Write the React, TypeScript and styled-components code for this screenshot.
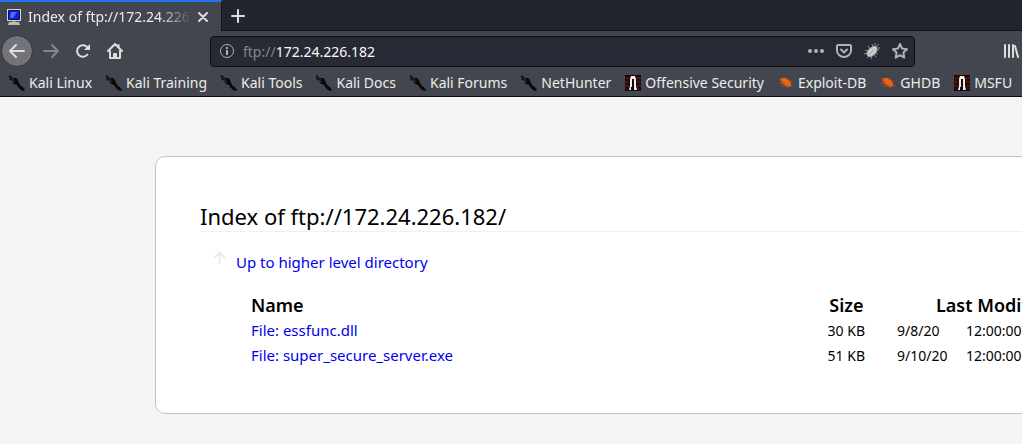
import React from "react";
import styled, { createGlobalStyle } from "styled-components";

const GlobalStyle = createGlobalStyle`
  * { box-sizing: border-box; }
  body {
    margin: 0;
    background: #f5f4f2;
    color: #000;
    font-family: "Noto Sans", "Open Sans", sans-serif;
    font-size: 14px;
    overflow-x: hidden;
  }
  button, input { font: inherit; color: inherit; }
  svg { display: block; flex: none; }
`;

const Chrome = styled.header`
  background: #43464e;
  color: #ececea;
  border-bottom: 1px solid #0c0c0d;
  overflow: hidden;
`;

const TabStrip = styled.div`
  display: flex;
  height: 31px;
  background: #23252e;
  border-bottom: 1px solid #15161c;
`;

const Tab = styled.div`
  display: flex;
  align-items: center;
  flex: none;
  width: 222px;
  height: 31px;
  padding: 0 12px 0 6px;
  gap: 6px;
  background: #43464e;
  border-top: 2px solid #2277f5;
  border-right: 1px solid #15161c;
`;

const TabTitle = styled.span`
  flex: 1;
  min-width: 0;
  overflow: hidden;
  white-space: nowrap;
  line-height: 22px;
  mask-image: linear-gradient(to left, transparent, #000 32px);
`;

const IconButton = styled.button<{ $size?: number; $round?: boolean; $dim?: boolean }>`
  display: flex;
  align-items: center;
  justify-content: center;
  flex: none;
  width: ${(p) => p.$size ?? 28}px;
  height: ${(p) => p.$size ?? 28}px;
  padding: 0;
  border: ${(p) => (p.$round ? "1px solid #33353b" : "0")};
  border-radius: ${(p) => (p.$round ? "50%" : "3px")};
  background: ${(p) => (p.$round ? "#72747a" : "transparent")};
  color: ${(p) => (p.$dim ? "#85878b" : "#dededb")};
`;

const NavBar = styled.div`
  display: flex;
  align-items: center;
  height: 40px;
  padding-left: 1px;
`;

const NavButtons = styled.div`
  display: flex;
  align-items: center;
  gap: 3px;
  flex: none;
  width: 209px;
`;

const UrlBar = styled.div`
  display: flex;
  align-items: center;
  flex: 1;
  height: 31px;
  min-width: 0;
  padding-left: 8px;
  margin-right: 85px;
  border: 1px solid #0f1014;
  border-radius: 4px;
  background: #272935;
`;

const Scheme = styled.label`
  margin-left: 8px;
  color: #85868c;
`;

const UrlInput = styled.input`
  flex: 1;
  min-width: 0;
  padding: 0;
  border: 0;
  outline: 0;
  background: transparent;
  color: #f9f9fa;
`;

const Bookmarks = styled.nav`
  display: flex;
  gap: 14px;
  height: 25px;
  padding-left: 9px;
`;

const Bookmark = styled.a`
  display: flex;
  align-items: center;
  flex: none;
  gap: 4px;
  height: 24px;
  color: inherit;
  text-decoration: none;
  line-height: 20px;
  white-space: nowrap;
`;

const Page = styled.main`
  padding: 59px 0 30px 155px;
  overflow: hidden;
`;

const Card = styled.section`
  margin-right: -134px;
  padding: 44px 45px 45px 44px;
  border: 1px solid #c6c2be;
  border-radius: 10px;
  background: #fff;
`;

const Title = styled.h1`
  margin: 0;
  border-bottom: 1px solid #f0f0f0;
  font-size: 22px;
  font-weight: 400;
  line-height: 30px;
`;

const UpLink = styled.a`
  display: flex;
  gap: 9px;
  margin: 18px 0 0 12px;
  color: #0000ee;
  font-size: 15px;
  line-height: 24px;
  text-decoration: none;
`;

const Listing = styled.table`
  width: calc(100% - 51px);
  margin: 18px 0 0 51px;
  border-collapse: collapse;
  table-layout: fixed;
  white-space: nowrap;
`;

const Head = styled.th<{ $left?: boolean }>`
  padding: 0;
  font-size: 18px;
  font-weight: 600;
  line-height: 26px;
  text-align: ${(p) => (p.$left ? "left" : "center")};
`;

const Cell = styled.td<{ $kind?: "name" | "size" }>`
  padding: 0 ${(p) => (p.$kind === "size" ? 16 : 0)}px 0 ${(p) => (p.$kind ? 0 : 16)}px;
  font-size: ${(p) => (p.$kind === "name" ? 15 : 14)}px;
  line-height: 25px;
  text-align: ${(p) => (p.$kind === "size" ? "right" : "left")};
`;

const Col = styled.col<{ $width?: number }>`
  width: ${(p) => (p.$width ? `${p.$width}px` : "auto")};
`;

const FileLink = styled.a`
  color: #0000ee;
  text-decoration: none;
`;

const ComputerIcon = () => (
  <svg width="16" height="16" viewBox="0 0 16 16">
    <path d="M1 0h14v12H1z" fill="#d9d6c8" />
    <path d="M2.500 1.500h11v9h-11z" fill="#1022d8" stroke="#08105e" />
    <path d="M5 3h6L7 9H4z" fill="#4b6cff" />
    <path d="M6 12h4v1H6z" fill="#8b897f" />
    <path d="M3 13h10l1 3H2z" fill="#bdbab0" />
  </svg>
);

const DragonIcon = () => (
  <svg width="16" height="16" viewBox="0 0 16 16" fill="#08090b">
    <path d="M0 0l2 1 2 2 3 0 2 2 1 3 2 3 2 1 2 3-1 1-3-1-3-3-1-2-3-1-2-3-2-1-1-3z" />
    <path d="M1 2l4 3M2 5l4 2" stroke="#3a3c42" />
  </svg>
);

const SecurityIcon = () => (
  <svg width="16" height="16" viewBox="0 0 16 16">
    <path d="M0 0h16v16H0z" fill="#1c0606" />
    <path d="M0 3h5M11 3h5M0 7h4M12 7h4M0 11h4M12 11h4" stroke="#5e2826" />
    <path d="M1 5h3M12 5h3M1 9h2M13 9h2M1 14h2M13 14h2" stroke="#421715" />
    <path d="M6 1h4l1 3v7l1 4H9V5H7v6l-1 4H4l1-4V4z" fill="#f1eeea" />
    <path d="M7 4h2v7H7zM6 12h3v4H6z" fill="#15090a" />
  </svg>
);

const ExploitIcon = () => (
  <svg width="16" height="16" viewBox="0 0 16 16" fill="#ef6212">
    <path d="M2 4l3-1 3 0 3 2 2 3 0 3-2 1-4-1-3-3z" />
    <path d="M2 5l3 2M1 8h5M3 11l4-2M5 12l3-2M9 5l2-2M11 7l3-1M12 10l3 1M9 10l0 3M2 3l3 1" fill="none" stroke="#ad4e1b" />
  </svg>
);

const bookmarks: { label: string; Icon: React.FC }[] = [
  { label: "Kali Linux", Icon: DragonIcon },
  { label: "Kali Training", Icon: DragonIcon },
  { label: "Kali Tools", Icon: DragonIcon },
  { label: "Kali Docs", Icon: DragonIcon },
  { label: "Kali Forums", Icon: DragonIcon },
  { label: "NetHunter", Icon: DragonIcon },
  { label: "Offensive Security", Icon: SecurityIcon },
  { label: "Exploit-DB", Icon: ExploitIcon },
  { label: "GHDB", Icon: ExploitIcon },
  { label: "MSFU", Icon: SecurityIcon },
];

const files = [
  { name: "essfunc.dll", size: "30 KB", date: "9/8/20", time: "12:00:00 AM GMT" },
  { name: "super_secure_server.exe", size: "51 KB", date: "9/10/20", time: "12:00:00 AM GMT" },
];

const stroke = { fill: "none", stroke: "currentColor", strokeWidth: 2, strokeLinecap: "round", strokeLinejoin: "round" } as const;

export default function App() {
  return (
    <>
      <GlobalStyle />
      <Chrome>
        <TabStrip>
          <Tab>
            <ComputerIcon />
            <TabTitle>Index of ftp://172.24.226.182/</TabTitle>
            <IconButton $size={12} aria-label="Close tab">
              <svg width="10" height="10" viewBox="0 0 10 10" {...stroke}><path d="M1 1l8 8M9 1L1 9" /></svg>
            </IconButton>
          </Tab>
          <IconButton $size={32} aria-label="New tab">
            <svg width="14" height="14" viewBox="0 0 14 14" {...stroke}><path d="M7 1v12M1 7h12" /></svg>
          </IconButton>
        </TabStrip>
        <NavBar>
          <NavButtons>
            <IconButton $size={32} $round aria-label="Back">
              <svg width="16" height="16" viewBox="0 0 16 16" {...stroke}><path d="M15 8H1M7 2L1 8l6 6" /></svg>
            </IconButton>
            <IconButton $size={29} $dim aria-label="Forward">
              <svg width="16" height="16" viewBox="0 0 16 16" {...stroke}><path d="M1 8h14M9 2l6 6-6 6" /></svg>
            </IconButton>
            <IconButton $size={29} aria-label="Reload">
              <svg width="16" height="16" viewBox="0 0 16 16" {...stroke}>
                <path d="M12.500 11.500A5.800 5.800 0 1 1 12.500 4.500" />
                <path d="M15 1v6H9z" fill="currentColor" stroke="none" />
              </svg>
            </IconButton>
            <IconButton $size={29} aria-label="Home">
              <svg width="16" height="16" viewBox="0 0 16 16" {...stroke}>
                <path d="M1 8l7-7 7 7M3 8v7h10V8" />
                <path d="M7 15v-4h2v4M11.500 2v2" />
              </svg>
            </IconButton>
          </NavButtons>
          <UrlBar>
            <svg width="16" height="16" viewBox="0 0 16 16" fill="none" stroke="#b1b1b3">
              <circle cx="8" cy="8" r="6.500" />
              <path d="M8 7v5M8 4v2" strokeWidth="2" />
            </svg>
            <Scheme htmlFor="address">ftp://</Scheme>
            <UrlInput id="address" defaultValue="172.24.226.182" />
            <IconButton aria-label="Page actions">
              <svg width="16" height="16" viewBox="0 0 16 16" fill="#b1b1b3">
                <circle cx="2" cy="8" r="2" /><circle cx="8" cy="8" r="2" /><circle cx="14" cy="8" r="2" />
              </svg>
            </IconButton>
            <IconButton aria-label="Save to Pocket">
              <svg width="16" height="16" viewBox="0 0 16 16" {...stroke} stroke="#b1b1b3">
                <path d="M2 2h12c.6 0 1 .4 1 1v4.500a7 6.500 0 0 1-14 0V3c0-.6.4-1 1-1z" />
                <path d="M5 6.500l3 3 3-3" />
              </svg>
            </IconButton>
            <IconButton aria-label="Inspect element">
              <svg width="16" height="16" viewBox="0 0 16 16" fill="none" stroke="#8e8f93">
                <path d="M6 6L4 3M4 8L1 7M4 10L0 11M5 13l-2 2M8 13l-1 3M10 11l2 3M11 9l3 2M12 7l3 0M9 4L8 1M12 4l3-3M11 3V0M13 5h3" />
                <ellipse cx="8" cy="8.500" rx="3.500" ry="6" transform="rotate(45 8 8.500)" fill="#d0d0d0" stroke="#b5b5b5" />
                <path d="M5 12l5-6" stroke="#999" />
              </svg>
            </IconButton>
            <IconButton aria-label="Bookmark this page">
              <svg width="16" height="16" viewBox="0 0 16 16" {...stroke} stroke="#b1b1b3">
                <path d="M8 1l2.100 4.600 4.900.6-3.600 3.400.9 5L8 12.200l-4.300 2.400.9-5L1 6.200l4.900-.6z" />
              </svg>
            </IconButton>
          </UrlBar>
          <IconButton $size={22} aria-label="Library">
            <svg width="16" height="16" viewBox="0 0 16 16" {...stroke}><path d="M2 2v12M6 2v12M10 2v12M12 3l3 11" /></svg>
          </IconButton>
        </NavBar>
        <Bookmarks aria-label="Bookmarks">
          {bookmarks.map(({ label, Icon }) => (
            <Bookmark href="#" key={label}><Icon />{label}</Bookmark>
          ))}
        </Bookmarks>
      </Chrome>
      <Page>
        <Card>
          <Title>Index of ftp://172.24.226.182/</Title>
          <UpLink href="#">
            <svg width="15" height="16" viewBox="0 0 15 16" fill="none" stroke="#ebebeb" strokeWidth="2">
              <path d="M7.500 14V3M2 8l5.500-5.500L13 8" />
            </svg>
            Up to higher level directory
          </UpLink>
          <Listing>
            <colgroup>
              <Col /><Col $width={69} /><Col $width={69} /><Col $width={160} />
            </colgroup>
            <thead>
              <tr>
                <Head $left>Name</Head>
                <Head>Size</Head>
                <Head colSpan={2}>Last Modified</Head>
              </tr>
            </thead>
            <tbody>
              {files.map((f) => (
                <tr key={f.name}>
                  <Cell $kind="name"><FileLink href="#">File: {f.name}</FileLink></Cell>
                  <Cell $kind="size">{f.size}</Cell>
                  <Cell>{f.date}</Cell>
                  <Cell>{f.time}</Cell>
                </tr>
              ))}
            </tbody>
          </Listing>
        </Card>
      </Page>
    </>
  );
}
